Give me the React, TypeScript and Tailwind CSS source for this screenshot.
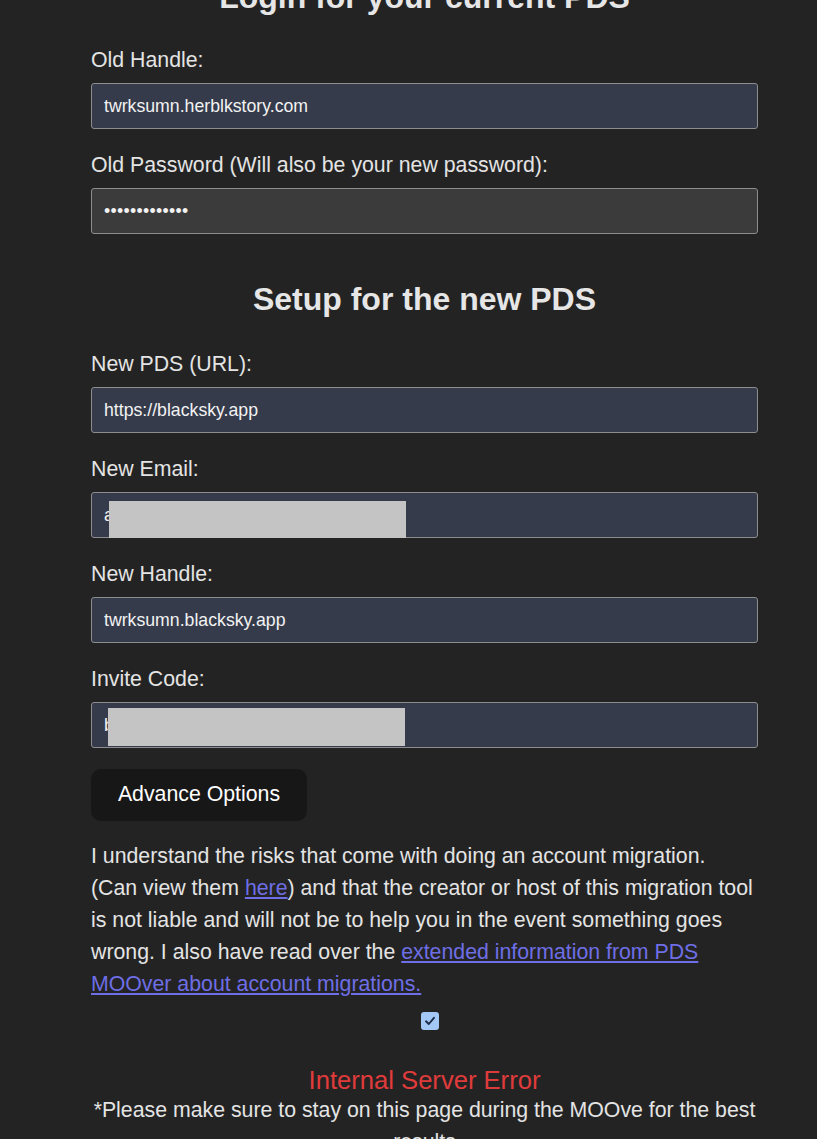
import React from "react";

function Field({
  label,
  value,
  password,
  redact,
  first,
}: {
  label: string;
  value: string;
  password?: boolean;
  redact?: { left: number; top: number; width: number; height: number };
  first?: "a" | "b";
}) {
  const mt = first === "a" ? "mt-[31px]" : first === "b" ? "mt-[33px]" : "mt-[24px]";
  return (
    <div className={`${mt} flex flex-col`}>
      <div className="text-[21.3px] leading-[24px] text-[#e4e4e4]">{label}</div>
      <div
        className={`relative mt-[11px] h-[46px] rounded-[3px] border border-[#8d8d8d] flex items-center pl-[12px] text-[17.7px] text-[#f2f2f2] ${
          password ? "bg-[#3b3b3b]" : "bg-[#353b4b]"
        }`}
      >
        <span className={password ? "tracking-[0.3px]" : ""}>{value}</span>
        {redact && (
          <div
            className="absolute bg-[#c4c4c4]"
            style={{
              left: redact.left,
              top: redact.top,
              width: redact.width,
              height: redact.height,
            }}
          />
        )}
      </div>
    </div>
  );
}

export default function App() {
  return (
    <div
      className="min-h-screen bg-[#232323] overflow-hidden"
      style={{ fontFamily: '"Liberation Sans", Arial, Helvetica, sans-serif' }}
    >
      <div className="ml-[91px] w-[667px] flex flex-col">
        <h2 className="mt-[-23px] text-center text-[32px] leading-[40px] font-bold text-[#e6e6e6]">
          Login for your current PDS
        </h2>
        <Field label="Old Handle:" value="twrksumn.herblkstory.com" first="a" />
        <Field
          label="Old Password (Will also be your new password):"
          value="•••••••••••••"
          password
        />
        <h2 className="mt-[45px] text-center text-[32px] leading-[40px] font-bold text-[#e6e6e6]">
          Setup for the new PDS
        </h2>
        <Field label="New PDS (URL):" value="https://blacksky.app" first="b" />
        <Field
          label="New Email:"
          value="a"
          redact={{ left: 17, top: 8, width: 297, height: 37 }}
        />
        <Field label="New Handle:" value="twrksumn.blacksky.app" />
        <Field
          label="Invite Code:"
          value="b"
          redact={{ left: 16, top: 5, width: 297, height: 38 }}
        />
        <button className="mt-[21px] h-[52px] w-[216px] rounded-[10px] bg-[#171717] text-[21.3px] text-white flex items-center justify-center">
          Advance Options
        </button>
        <p className="mt-[19px] w-[663px] text-[21.3px] leading-[32px] text-[#e4e4e4]">
          I understand the risks that come with doing an account migration. (Can view them{" "}
          <a className="text-[#6e6ee6] underline" href="#">
            here
          </a>
          ) and that the creator or host of this migration tool is not liable and will not be to help
          you in the event something goes wrong. I also have read over the{" "}
          <a className="text-[#6e6ee6] underline" href="#">
            extended information from PDS MOOver about account migrations.
          </a>
        </p>
        <div className="mt-[12px] flex justify-center pl-[11px]">
          <span className="w-[18px] h-[18px] rounded-[3px] bg-[#a4c8f6] flex items-center justify-center">
            <svg width="12" height="12" viewBox="0 0 12 12">
              <path
                d="M2 6.3 L4.8 9 L10 2.8"
                fill="none"
                stroke="#1b2a44"
                strokeWidth="1.9"
                strokeLinecap="round"
                strokeLinejoin="round"
              />
            </svg>
          </span>
        </div>
        <div className="mt-[36px] text-center text-[25.6px] leading-[28px] text-[#e03b3b]">
          Internal Server Error
        </div>
        <p className="text-center text-[21.3px] leading-[32px] text-[#e4e4e4]">
          *Please make sure to stay on this page during the MOOve for the best results
        </p>
      </div>
    </div>
  );
}
